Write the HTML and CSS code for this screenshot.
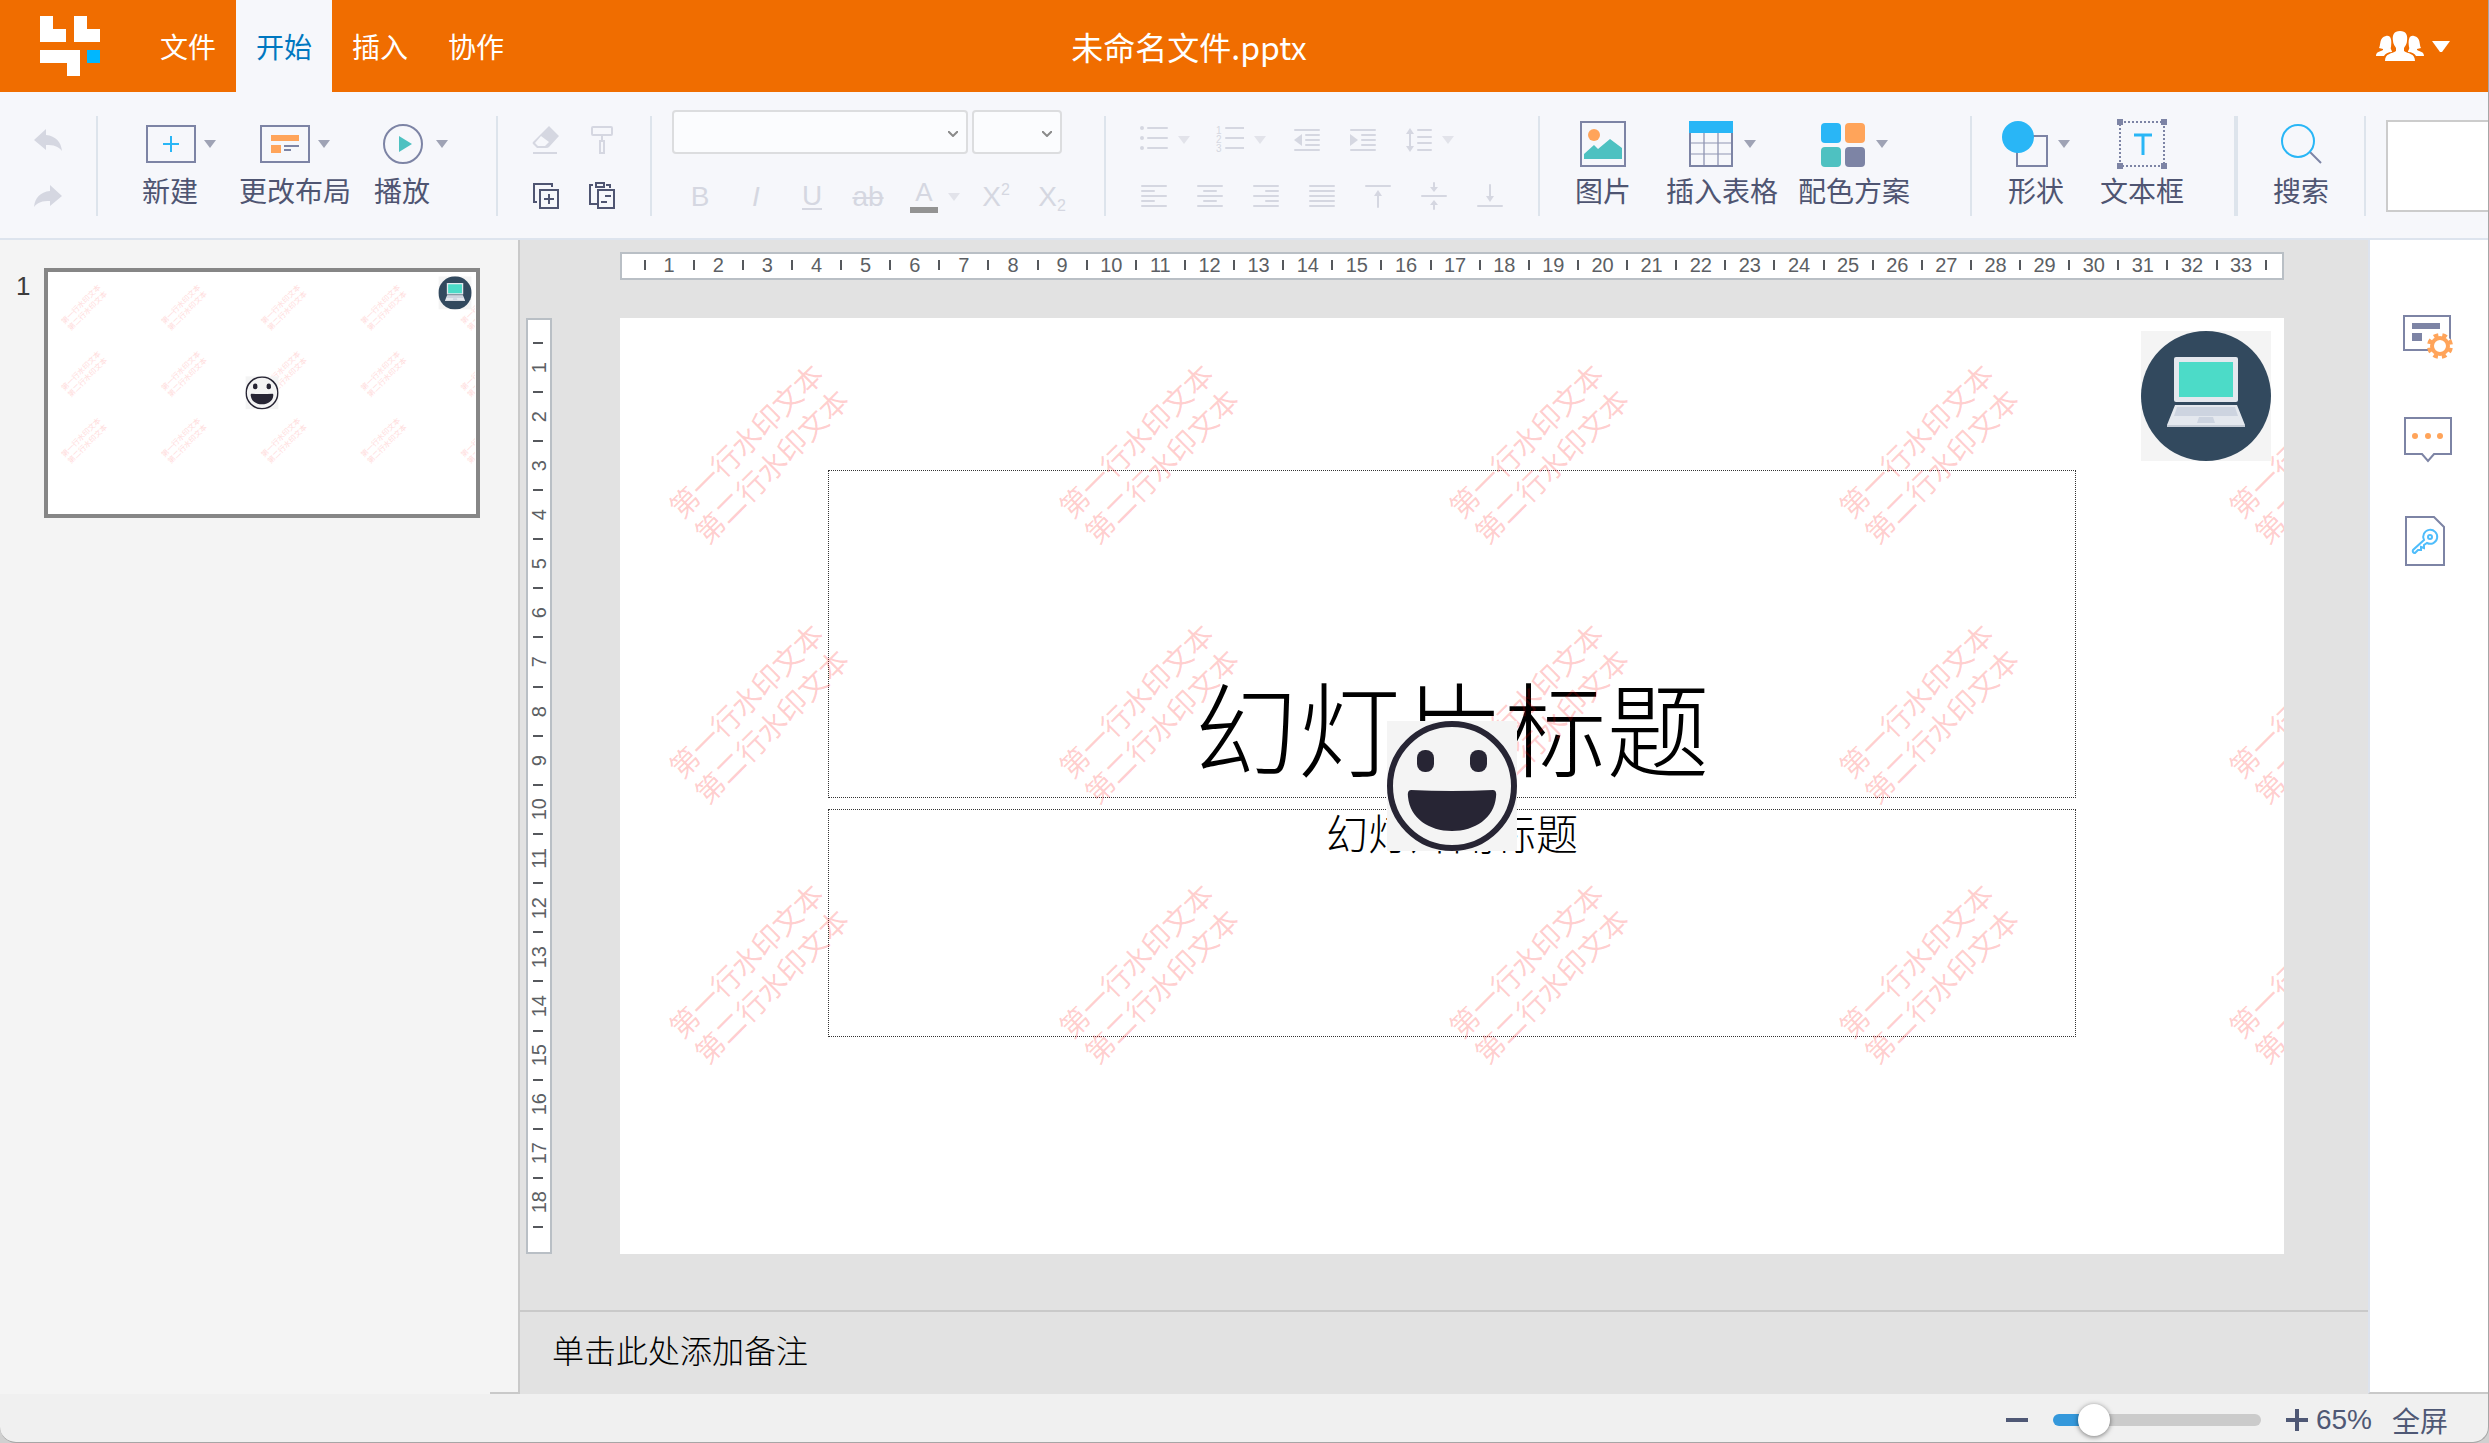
FILE: index.html
```html
<!DOCTYPE html>
<html lang="zh-CN">
<head>
<meta charset="utf-8">
<meta name="viewport" content="width=device-width, initial-scale=1">
<title>未命名文件.pptx</title>
<link rel="stylesheet" href="styles.css">
</head>
<body>
<svg class="defs" aria-hidden="true">
  <symbol id="laptop" viewBox="0 0 130 130">
    <rect width="130" height="130" fill="#f4f4f4"/>
    <circle cx="65" cy="65" r="65" fill="#32495e"/>
    <rect x="33" y="26" width="64" height="45" rx="2" fill="#e4e8ee"/>
    <rect x="38" y="31" width="54" height="35" fill="#4cdbc8"/>
    <path d="M34 74H96L104 94V96H26V94Z" fill="#e4e8ee"/>
    <path d="M36 76H94L97 85H33Z" fill="#cdd4e0"/>
    <path d="M58 86H72L74 92H56Z" fill="#cdd4e0"/>
    <path d="M26 94H104V96H26Z" fill="#c5ccd6"/>
  </symbol>
  <symbol id="smiley" viewBox="0 0 130 130">
    <rect width="130" height="130" fill="#f4f4f4"/>
    <circle cx="65" cy="65" r="62" fill="none" stroke="#272534" stroke-width="6"/>
    <rect x="30" y="29" width="17" height="22" rx="8" fill="#272534"/>
    <rect x="83" y="29" width="17" height="22" rx="8" fill="#272534"/>
    <path d="M24 69Q65 71 106 69Q110 69 109 76C107 97 88 110 65 110S23 97 21 76Q20 69 24 69Z" fill="#272534"/>
  </symbol>
  <symbol id="caret" viewBox="0 0 12 8"><path d="M0 0H12L6 8Z"/></symbol>
</svg>

<div class="app">
  <header class="titlebar">
    <svg class="logo" viewBox="0 0 60 60" aria-label="logo"><path fill="#fff" d="M0 0H13V13H26V26H0ZM34 0H47V13H60V26H34ZM0 34H40V60H27V47H0Z"/><path fill="#00b7ff" d="M47 34H60V47H47Z"/></svg>
    <nav class="tabs">
      <button class="tab">文件</button>
      <button class="tab active">开始</button>
      <button class="tab">插入</button>
      <button class="tab">协作</button>
    </nav>
    <h1 class="doc-title">未命名文件.pptx</h1>
    <button class="users" aria-label="协作用户">
      <svg width="48" height="30" viewBox="0 0 48 30" fill="#fff"><path d="M10 5C15 4 16 9 15 16C14 18 16 19 16 21C12 21 9 23 8 25H0C0 21 3 21 7 19V18L3 17C5 14 3 6 10 5Z"/><path d="M38 5C33 4 32 9 33 16C34 18 32 19 32 21C36 21 39 23 40 25H48C48 21 45 21 41 19V18L45 17C43 14 45 6 38 5Z"/><path d="M24 0C30 0 32 4 31 10C31 13 29 15 28 17V20C32 23 39 22 39 30H9C9 22 16 23 20 20V17C19 15 17 13 17 10C16 4 18 0 24 0Z"/></svg>
      <svg width="18" height="11" viewBox="0 0 18 11" fill="#fff"><path d="M0 0H18L10 11H8Z"/></svg>
    </button>
  </header>

  <div class="toolbar">
    <div class="group small">
      <div class="row"><button class="tool" aria-label="撤销"><svg class="off" width="28" height="24" viewBox="0 0 28 24"><path d="M0 12L12 1V7C22 8 27 14 28 23C24 18 20 17 12 17V22Z"/></svg></button></div>
      <div class="row"><button class="tool" aria-label="重做"><svg class="off" width="28" height="24" viewBox="0 0 28 24"><path d="M28 12L16 1V7C6 8 1 14 0 23C4 18 8 17 16 17V22Z"/></svg></button></div>
    </div>
    <i class="sep"></i>
    <div class="group file">
      <button class="big lead"><span class="pic">
        <svg width="50" height="50" viewBox="0 0 50 50"><rect x="1" y="7" width="48" height="36" fill="none" stroke="#7d84a5" stroke-width="2"/><path d="M25 17V33M17 25H33" stroke="#29b6f6" stroke-width="2"/></svg>
        <svg class="caret"><use href="#caret"/></svg></span>新建</button>
      <button class="big"><span class="pic">
        <svg width="50" height="50" viewBox="0 0 50 50"><rect x="1" y="7" width="48" height="36" fill="none" stroke="#7d84a5" stroke-width="2"/><path d="M11 16H39V22H11ZM11 26H21V34H11Z" fill="#ffa45a"/><path d="M24 27H39M24 31H31" stroke="#7d84a5" stroke-width="2"/></svg>
        <svg class="caret"><use href="#caret"/></svg></span>更改布局</button>
      <button class="big lead"><span class="pic">
        <svg width="50" height="50" viewBox="0 0 50 50"><circle cx="25" cy="25" r="19" fill="none" stroke="#7d84a5" stroke-width="2"/><path d="M21 17L34 25L21 33Z" fill="#4ec1c1"/></svg>
        <svg class="caret"><use href="#caret"/></svg></span>播放</button>
    </div>
    <i class="sep"></i>
    <div class="group small">
      <div class="row">
        <button class="tool" aria-label="清除格式"><svg width="28" height="28" viewBox="0 0 28 28"><path fill="#d5d7e1" d="M17 0L27 10L17 21Q16 22 14 22H5L1 18Q0 17 1 16ZM9 10L3 17L6 20H13L17 16Z"/><path fill="#d5d7e1" d="M1 26H25V28H1Z"/></svg></button>
        <button class="tool" aria-label="格式刷"><svg width="28" height="28" viewBox="0 0 28 28" fill="none" stroke="#d5d7e1" stroke-width="2"><rect x="4" y="1" width="20" height="8" rx="1"/><path d="M14 9V14"/><rect x="12" y="15" width="4" height="12"/></svg></button>
      </div>
      <div class="row">
        <button class="tool" aria-label="复制"><svg width="28" height="28" viewBox="0 0 28 28" fill="none" stroke="#4f5572" stroke-width="2"><path d="M5 20H2V2H20V5"/><rect x="8" y="8" width="18" height="18"/><path d="M17 12V22M12 17H22"/></svg></button>
        <button class="tool" aria-label="粘贴"><svg width="28" height="28" viewBox="0 0 28 28" fill="none" stroke="#4f5572" stroke-width="2"><path d="M9 22H2V3H5M18 3H22V6"/><rect x="8" y="1" width="8" height="4"/><rect x="10" y="8" width="16" height="18"/><path d="M17 14H23M13 20H19"/></svg></button>
      </div>
    </div>
    <i class="sep"></i>
    <div class="group font">
      <div class="selects">
        <label class="pick wide"><select aria-label="字体"><option></option></select><svg width="10" height="6" viewBox="0 0 10 6"><path d="M0 0L5 5L10 0" fill="none" stroke="#8a8a8a" stroke-width="2"/></svg></label>
        <label class="pick"><select aria-label="字号"><option></option></select><svg width="10" height="6" viewBox="0 0 10 6"><path d="M0 0L5 5L10 0" fill="none" stroke="#8a8a8a" stroke-width="2"/></svg></label>
      </div>
      <div class="row">
        <button class="tool glyph">B</button>
        <button class="tool glyph italic">I</button>
        <button class="tool glyph under"><span>U</span></button>
        <button class="tool glyph strike"><span>ab</span></button>
        <button class="tool glyph color"><span>A</span><svg class="caret off"><use href="#caret"/></svg></button>
        <button class="tool glyph">X<sup>2</sup></button>
        <button class="tool glyph">X<sub>2</sub></button>
      </div>
    </div>
    <i class="sep"></i>
    <div class="group para">
      <div class="row">
        <button class="tool drop" aria-label="项目符号"><svg class="line" width="28" height="28" viewBox="0 0 28 28"><path d="M8 2H27M8 12H27M8 22H27"/><g stroke="none" fill="#d5d7e1"><circle cx="2" cy="2" r="2"/><circle cx="2" cy="12" r="2"/><circle cx="2" cy="22" r="2"/></g></svg><svg class="caret off"><use href="#caret"/></svg></button>
        <button class="tool drop" aria-label="编号"><svg class="line" width="28" height="28" viewBox="0 0 28 28"><path d="M10 2H28M10 12H28M10 22H28"/><g class="nums"><text x="0" y="8">1</text><text x="0" y="17">2</text><text x="0" y="26">3</text></g></svg><svg class="caret off"><use href="#caret"/></svg></button>
        <button class="tool" aria-label="减少缩进"><svg class="line" width="28" height="28" viewBox="0 0 28 28"><path d="M3 4H27M14 9H27M14 14H27M14 19H27M3 24H27"/><path class="solid" d="M2 14L10 8V20Z"/></svg></button>
        <button class="tool" aria-label="增加缩进"><svg class="line" width="28" height="28" viewBox="0 0 28 28"><path d="M3 4H27M14 9H27M14 14H27M14 19H27M3 24H27"/><path class="solid" d="M10 14L2 8V20Z"/></svg></button>
        <button class="tool drop" aria-label="行距"><svg class="line" width="28" height="28" viewBox="0 0 28 28"><path d="M14 4H27M14 11H27M14 17H27M14 24H27M6 6V22"/><path class="solid" d="M6 2L10 8H2ZM6 26L10 20H2Z"/></svg><svg class="caret off"><use href="#caret"/></svg></button>
      </div>
      <div class="row">
        <button class="tool" aria-label="左对齐"><svg class="line" width="28" height="28" viewBox="0 0 28 28"><path d="M2 4H26M2 9H14M2 14H26M2 19H14M2 24H26"/></svg></button>
        <button class="tool" aria-label="居中"><svg class="line" width="28" height="28" viewBox="0 0 28 28"><path d="M2 4H26M8 9H20M2 14H26M8 19H20M2 24H26"/></svg></button>
        <button class="tool" aria-label="右对齐"><svg class="line" width="28" height="28" viewBox="0 0 28 28"><path d="M2 4H26M14 9H26M2 14H26M14 19H26M2 24H26"/></svg></button>
        <button class="tool" aria-label="两端对齐"><svg class="line" width="28" height="28" viewBox="0 0 28 28"><path d="M2 4H26M2 9H26M2 14H26M2 19H26M2 24H26"/></svg></button>
        <button class="tool" aria-label="顶端对齐"><svg class="line" width="28" height="28" viewBox="0 0 28 28"><path d="M2 4H26M14 12V25"/><path class="solid" d="M14 8L18 14H10Z"/></svg></button>
        <button class="tool" aria-label="垂直居中"><svg class="line" width="28" height="28" viewBox="0 0 28 28"><path d="M2 14H26M14 1V6M14 22V27"/><path class="solid" d="M14 10L18 5H10ZM14 18L18 23H10Z"/></svg></button>
        <button class="tool" aria-label="底端对齐"><svg class="line" width="28" height="28" viewBox="0 0 28 28"><path d="M2 24H26M14 3V15"/><path class="solid" d="M14 20L18 14H10Z"/></svg></button>
      </div>
    </div>
    <i class="sep"></i>
    <div class="group insert">
      <button class="big picture"><span class="pic">
        <svg width="46" height="50" viewBox="0 0 46 50"><rect x="1" y="3" width="44" height="44" fill="none" stroke="#7d84a5" stroke-width="2"/><circle cx="14" cy="16" r="6" fill="#ffa45a"/><path d="M4 40V35L14 26L18 30L30 20L42 29V40Z" fill="#4ec1c1"/></svg></span>图片</button>
      <button class="big"><span class="pic tight">
        <svg width="46" height="50" viewBox="0 0 46 50"><path d="M16 14V47M30 14V47" stroke="#b3b7cc" stroke-width="2"/><path d="M2 24H44M2 35H44" stroke="#8f95b2" stroke-width="1"/><rect x="2" y="3" width="42" height="44" fill="none" stroke="#7d84a5" stroke-width="2"/><path d="M1 2H45V14H1Z" fill="#29b6f6"/></svg>
        <svg class="caret"><use href="#caret"/></svg></span>插入表格</button>
      <button class="big"><span class="pic tight">
        <svg width="46" height="50" viewBox="0 0 46 50"><rect x="1" y="4" width="20" height="20" rx="4" fill="#29b6f6"/><rect x="25" y="4" width="20" height="20" rx="4" fill="#ffa45a"/><rect x="1" y="28" width="20" height="20" rx="4" fill="#4ec1c1"/><rect x="25" y="28" width="20" height="20" rx="4" fill="#7d84a5"/></svg>
        <svg class="caret"><use href="#caret"/></svg></span>配色方案</button>
    </div>
    <i class="sep"></i>
    <div class="group shape">
      <button class="big"><span class="pic tight">
        <svg width="46" height="50" viewBox="0 0 46 50"><rect x="15" y="17" width="30" height="30" fill="none" stroke="#7d84a5" stroke-width="2"/><circle cx="16" cy="18" r="16" fill="#29b6f6"/></svg>
        <svg class="caret"><use href="#caret"/></svg></span>形状</button>
      <button class="big"><span class="pic">
        <svg width="50" height="50" viewBox="0 0 50 50"><rect x="3" y="3" width="44" height="44" fill="none" stroke="#7d84a5" stroke-width="2" stroke-dasharray="2 2"/><path d="M0 0H6V6H0ZM44 0H50V6H44ZM0 44H6V50H0ZM44 44H50V50H44Z" fill="#7d84a5"/><path d="M17 16H35M26 16V36" stroke="#29b6f6" stroke-width="3"/></svg></span>文本框</button>
    </div>
    <i class="sep thick"></i>
    <div class="group search">
      <button class="big"><span class="pic">
        <svg width="50" height="50" viewBox="0 0 50 50"><path d="M34 33L45 44" stroke="#7d84a5" stroke-width="2"/><circle cx="22" cy="22" r="16" fill="none" stroke="#29b6f6" stroke-width="2"/></svg></span>搜索</button>
    </div>
    <i class="sep"></i>
    <div class="gallery"></div>
  </div>

  <main class="main">
    <aside class="slides">
      <span class="num">1</span>
      <button class="thumb" aria-label="幻灯片 1">
        <svg viewBox="0 0 1664 936">
          <g class="marks">
            <g id="mark" transform="translate(138 135) rotate(-45)"><text y="-8">第一行水印文本</text><text y="28">第二行水印文本</text></g>
            <use href="#mark" x="390"/><use href="#mark" x="780"/><use href="#mark" x="1170"/><use href="#mark" x="1560"/>
            <use href="#mark" y="260"/><use href="#mark" x="390" y="260"/><use href="#mark" x="780" y="260"/><use href="#mark" x="1170" y="260"/><use href="#mark" x="1560" y="260"/>
            <use href="#mark" y="520"/><use href="#mark" x="390" y="520"/><use href="#mark" x="780" y="520"/><use href="#mark" x="1170" y="520"/><use href="#mark" x="1560" y="520"/>
          </g>
          <use href="#laptop" x="1521" y="13" width="130" height="130"/>
          <use href="#smiley" x="767" y="403" width="130" height="130"/>
        </svg>
      </button>
    </aside>

    <section class="editor">
      <div class="workspace">
        <div class="ruler across">
          <i class="lead-in"></i><span>1</span><span>2</span><span>3</span><span>4</span><span>5</span><span>6</span><span>7</span><span>8</span><span>9</span><span>10</span><span>11</span><span>12</span><span>13</span><span>14</span><span>15</span><span>16</span><span>17</span><span>18</span><span>19</span><span>20</span><span>21</span><span>22</span><span>23</span><span>24</span><span>25</span><span>26</span><span>27</span><span>28</span><span>29</span><span>30</span><span>31</span><span>32</span><span>33</span><i class="lead-out"></i>
        </div>
        <div class="ruler down">
          <i class="lead-in"></i><span><b>1</b></span><span><b>2</b></span><span><b>3</b></span><span><b>4</b></span><span><b>5</b></span><span><b>6</b></span><span><b>7</b></span><span><b>8</b></span><span><b>9</b></span><span><b>10</b></span><span><b>11</b></span><span><b>12</b></span><span><b>13</b></span><span><b>14</b></span><span><b>15</b></span><span><b>16</b></span><span><b>17</b></span><span><b>18</b></span><i class="lead-out"></i>
        </div>
        <div class="slide">
          <div class="holder title">幻灯片标题</div>
          <div class="holder subtitle">幻灯片副标题</div>
          <div class="watermarks">
            <p>第一行水印文本<br>第二行水印文本</p><p>第一行水印文本<br>第二行水印文本</p><p>第一行水印文本<br>第二行水印文本</p><p>第一行水印文本<br>第二行水印文本</p><p>第一行水印文本<br>第二行水印文本</p>
            <p>第一行水印文本<br>第二行水印文本</p><p>第一行水印文本<br>第二行水印文本</p><p>第一行水印文本<br>第二行水印文本</p><p>第一行水印文本<br>第二行水印文本</p><p>第一行水印文本<br>第二行水印文本</p>
            <p>第一行水印文本<br>第二行水印文本</p><p>第一行水印文本<br>第二行水印文本</p><p>第一行水印文本<br>第二行水印文本</p><p>第一行水印文本<br>第二行水印文本</p><p>第一行水印文本<br>第二行水印文本</p>
          </div>
          <svg class="sticker laptop"><use href="#laptop"/></svg>
          <svg class="sticker smiley"><use href="#smiley"/></svg>
        </div>
      </div>
      <div class="notes">单击此处添加备注</div>
    </section>

    <aside class="side">
      <button aria-label="版式设置"><svg width="50" height="50" viewBox="0 0 50 50"><rect x="1" y="4" width="46" height="34" fill="none" stroke="#7d84a5" stroke-width="2"/><path d="M9 11H37V17H9ZM9 21H19V29H9Z" fill="#7d84a5"/><circle cx="37" cy="34" r="12" fill="#fff"/><circle cx="37" cy="34" r="8" fill="none" stroke="#ffa45a" stroke-width="4"/><circle cx="37" cy="34" r="11" fill="none" stroke="#ffa45a" stroke-width="4" stroke-dasharray="4.6 4.04" stroke-dashoffset="-2"/></svg></button>
      <button aria-label="评论"><svg width="50" height="50" viewBox="0 0 50 50"><path d="M2 4H48V40H31L25 47L19 40H2Z" fill="none" stroke="#7d84a5" stroke-width="2"/><g fill="#ffa45a"><circle cx="12" cy="22" r="3"/><circle cx="25" cy="22" r="3"/><circle cx="37" cy="22" r="3"/></g></svg></button>
      <button aria-label="权限"><svg width="50" height="50" viewBox="0 0 50 50"><path d="M3 1H31L41 11V49H3Z" fill="none" stroke="#7d84a5" stroke-width="2"/><g fill="none" stroke="#4fbdfb" stroke-width="2"><path d="M21 24A7 7 0 1 1 24 27L21 29L21 32L18 31L18 34L15 34L12 37A2 2 0 0 1 10 34Z"/><circle cx="27" cy="21" r="2"/></g></svg></button>
    </aside>
  </main>

  <footer class="status">
    <button class="zoom" aria-label="缩小"><svg width="22" height="22" viewBox="0 0 22 22"><path d="M0 9H22V13H0Z" fill="#4f5875"/></svg></button>
    <input class="slider" type="range" min="10" max="400" value="65" aria-label="缩放">
    <button class="zoom" aria-label="放大"><svg width="22" height="22" viewBox="0 0 22 22"><path d="M0 9H9V0H13V9H22V13H13V22H9V13H0Z" fill="#4f5875"/></svg></button>
    <span class="percent">65%</span>
    <button class="full">全屏</button>
  </footer>
</div>
</body>
</html>
```
FILE: styles.css
```css
* { box-sizing: border-box; }

body {
  margin: 0;
  background: #d0d0d0;
  color: #4f5572;
  font-family: "Noto Sans CJK SC", sans-serif;
  font-size: 28px;
}

button {
  margin: 0;
  padding: 0;
  border: 0;
  background: none;
  color: inherit;
  font: inherit;
}

svg { display: block; flex: none; }
.defs { position: absolute; width: 0; height: 0; }

.app {
  display: flex;
  flex-direction: column;
  min-height: 100vh;
  overflow: hidden;
  border: solid #a6a6a6;
  border-width: 0 1px 1px 0;
  border-radius: 0 0 16px 16px;
  background: #f0f0f0;
}

/* title bar */
.titlebar {
  display: flex;
  height: 92px;
  padding: 0 38px 0 40px;
  background: #f06d00;
  color: #fff;
}
.logo { width: 60px; height: 60px; margin: 16px 40px 0 0; }
.tabs { display: flex; }
.tab { width: 96px; }
.tab.active { background: #f6f7fb; color: #0077c0; }
.doc-title {
  flex: 1;
  margin: 0;
  padding-right: 522px;
  font-size: 32px;
  font-weight: 400;
  line-height: 92px;
  text-align: center;
}
.users { display: flex; align-items: center; gap: 8px; }

/* toolbar */
.toolbar {
  display: flex;
  height: 148px;
  border-bottom: 2px solid #dde4ee;
  background: #f6f7fb;
  overflow: hidden;
}
.sep { flex: none; width: 2px; height: 100px; margin-top: 24px; background: #dde4ec; }
.sep.thick { width: 4px; }
.group { flex: none; display: flex; align-items: flex-start; }
.group.small, .group.font, .group.para { flex-direction: column; }
.group.small, .group.para { padding: 20px 20px 0; }
.group.file { width: 398px; padding: 27px 0 0 44px; gap: 23px; }
.group.font { width: 452px; padding: 18px 0 0 20px; gap: 15px; }
.group.para { width: 432px; }
.group.insert { width: 430px; padding: 27px 0 0 35px; gap: 20px; }
.group.shape { width: 262px; padding: 27px 0 0 30px; gap: 30px; }
.group.search { width: 126px; padding: 27px 0 0 35px; }
.picture { margin-right: 15px; }

.row { display: flex; height: 56px; }
.tool { display: flex; align-items: center; justify-content: center; width: 56px; height: 56px; }
.tool.drop { width: 76px; gap: 10px; padding-left: 14px; justify-content: flex-start; }
.off { fill: #d5d7e1; }
.line { fill: none; stroke: #d5d7e1; stroke-width: 2; stroke-linecap: round; }
.solid { fill: #d5d7e1; stroke: none; }
.nums { fill: #d5d7e1; stroke: none; font: 10px "Liberation Sans", sans-serif; }

.caret { width: 12px; height: 8px; fill: #9fa3b5; }
.caret.off { fill: #e2e3ea; }

.big { display: flex; flex-direction: column; align-items: center; gap: 4px; line-height: 34px; }
.big.lead { align-items: flex-start; }
.pic { display: flex; align-items: center; gap: 8px; }
.pic.tight { gap: 10px; }
.lead .pic { padding-left: 4px; }

.selects { display: flex; gap: 4px; }
.pick { position: relative; width: 90px; height: 44px; }
.pick.wide { width: 296px; }
.pick select {
  display: block;
  width: 100%;
  height: 100%;
  border: 2px solid #dcdddf;
  border-radius: 4px;
  background: #fbfcfe;
  appearance: none;
}
.pick svg { position: absolute; right: 10px; top: 21px; }

.glyph { color: #d5d7e1; font: 28px "Liberation Sans", sans-serif; }
.italic { font-style: italic; }
.under span { border-bottom: 2px solid #d5d7e1; line-height: 24px; }
.strike span { text-decoration: line-through; text-decoration-thickness: 2px; }
.glyph sup, .glyph sub { font-size: 16px; line-height: 0; }
.glyph sup { align-self: flex-start; margin-top: 21px; }
.glyph sub { align-self: flex-end; margin-bottom: 19px; }
.color { width: 72px; gap: 10px; padding-left: 14px; justify-content: flex-start; font-size: 26px; }
.color span { width: 28px; padding-bottom: 4px; border-bottom: 6px solid #939393; line-height: 22px; }

.gallery { flex: 1; height: 92px; margin: 28px -2px 0 20px; border: 2px solid #ccc; background: #fff; }

/* main area */
.main { display: grid; grid-template-columns: 520px 1fr 120px; flex: 1; }
.slides {
  display: flex;
  align-items: flex-start;
  gap: 16px;
  padding: 28px 38px 0 16px;
  border-right: 2px solid #c9c9c9;
  background: linear-gradient(#c9c9c9, #c9c9c9) right bottom / 28px 2px no-repeat #f4f4f4;
}
.num { width: 12px; color: #3c3c3c; font: 26px/36px "Liberation Sans", sans-serif; text-align: center; }
.thumb { flex: 1; padding: 1px; border: 4px solid #868686; background: #fff; }
.thumb svg { width: 100%; overflow: hidden; }
.marks { fill: #ffdcdc; font-size: 29px; text-anchor: middle; }

.editor { display: flex; flex-direction: column; min-width: 0; background: #e2e2e2; }
.workspace {
  display: grid;
  grid-template-columns: 26px 1fr;
  grid-template-rows: 28px auto;
  align-content: start;
  gap: 38px 68px;
  flex: 1;
  padding: 12px 84px 56px 6px;
}
.ruler {
  display: flex;
  background: #fff;
  box-shadow: inset 0 0 0 2px #b9bfc5;
  color: #5c5f64;
  font: 20px/26px "Liberation Sans", sans-serif;
}
.across { grid-column: 2; }
.down { flex-direction: column; }
.ruler span, .ruler i { position: relative; flex: 1 1 0; min-width: 0; min-height: 0; text-align: center; }
.ruler .lead-in { flex-grow: 0.5; }
.across .lead-out { flex-grow: 0.37; }
.down .lead-out { flex-grow: 0.55; }
.ruler span::before, .lead-out::before { content: ""; position: absolute; background: #55585c; }
.across span::before, .across .lead-out::before { left: -1px; top: 8px; width: 2px; height: 10px; }
.down span::before, .down .lead-out::before { left: 7px; top: -1px; width: 10px; height: 2px; }
.down span { display: flex; align-items: center; justify-content: center; }
.down b { font-weight: 400; line-height: 24px; writing-mode: vertical-rl; transform: rotate(180deg); }

.slide { position: relative; aspect-ratio: 16 / 9; overflow: hidden; background: #fff; color: #000; }
.holder {
  position: absolute;
  left: 12.5%;
  width: 75%;
  display: flex;
  justify-content: center;
  border: 1px dotted #333;
  font-weight: 200;
}
.title { top: 152px; height: 328px; align-items: flex-end; font-size: 103px; line-height: 142px; }
.subtitle { top: 491px; height: 228px; font-size: 42px; line-height: 44px; }
.watermarks {
  position: absolute;
  left: -57px;
  top: 4px;
  display: grid;
  grid-template-columns: repeat(5, 390px);
  grid-template-rows: repeat(3, 260px);
  place-items: center;
  color: rgba(255, 0, 0, 0.2);
  font-size: 29px;
  line-height: 36px;
}
.watermarks p { margin: 0; transform: rotate(-45deg); white-space: nowrap; }
.sticker { position: absolute; width: 130px; height: 130px; }
.laptop { right: 13px; top: 13px; }
.smiley { left: calc(50% - 65px); top: 403px; }

.notes {
  padding: 13px 32px 21px;
  border-top: 2px solid #c9c9c9;
  color: #000;
  font-size: 32px;
  font-weight: 300;
  line-height: 48px;
}

.side {
  display: flex;
  flex-direction: column;
  align-items: flex-start;
  gap: 52px;
  padding: 72px 0 0 33px;
  border-left: 2px solid #dde3ee;
  border-bottom: 2px solid #c9c9c9;
  background: #fff;
}

/* status bar */
.status {
  display: flex;
  align-items: center;
  justify-content: flex-end;
  height: 48px;
  padding: 4px 40px 0 0;
  color: #4f5875;
  line-height: 36px;
}
.slider {
  appearance: none;
  width: 208px;
  height: 12px;
  margin: 0 25px;
  border-radius: 6px;
  background: linear-gradient(to right, #3498db 20%, #cbcbcb 20%);
}
.slider::-webkit-slider-thumb {
  appearance: none;
  width: 32px;
  height: 32px;
  border-radius: 50%;
  background: #fff;
  box-shadow: 0 1px 5px rgba(0, 0, 0, 0.5);
}
.percent { margin: 0 20px 0 8px; font: 28px "Liberation Sans", sans-serif; }
```
